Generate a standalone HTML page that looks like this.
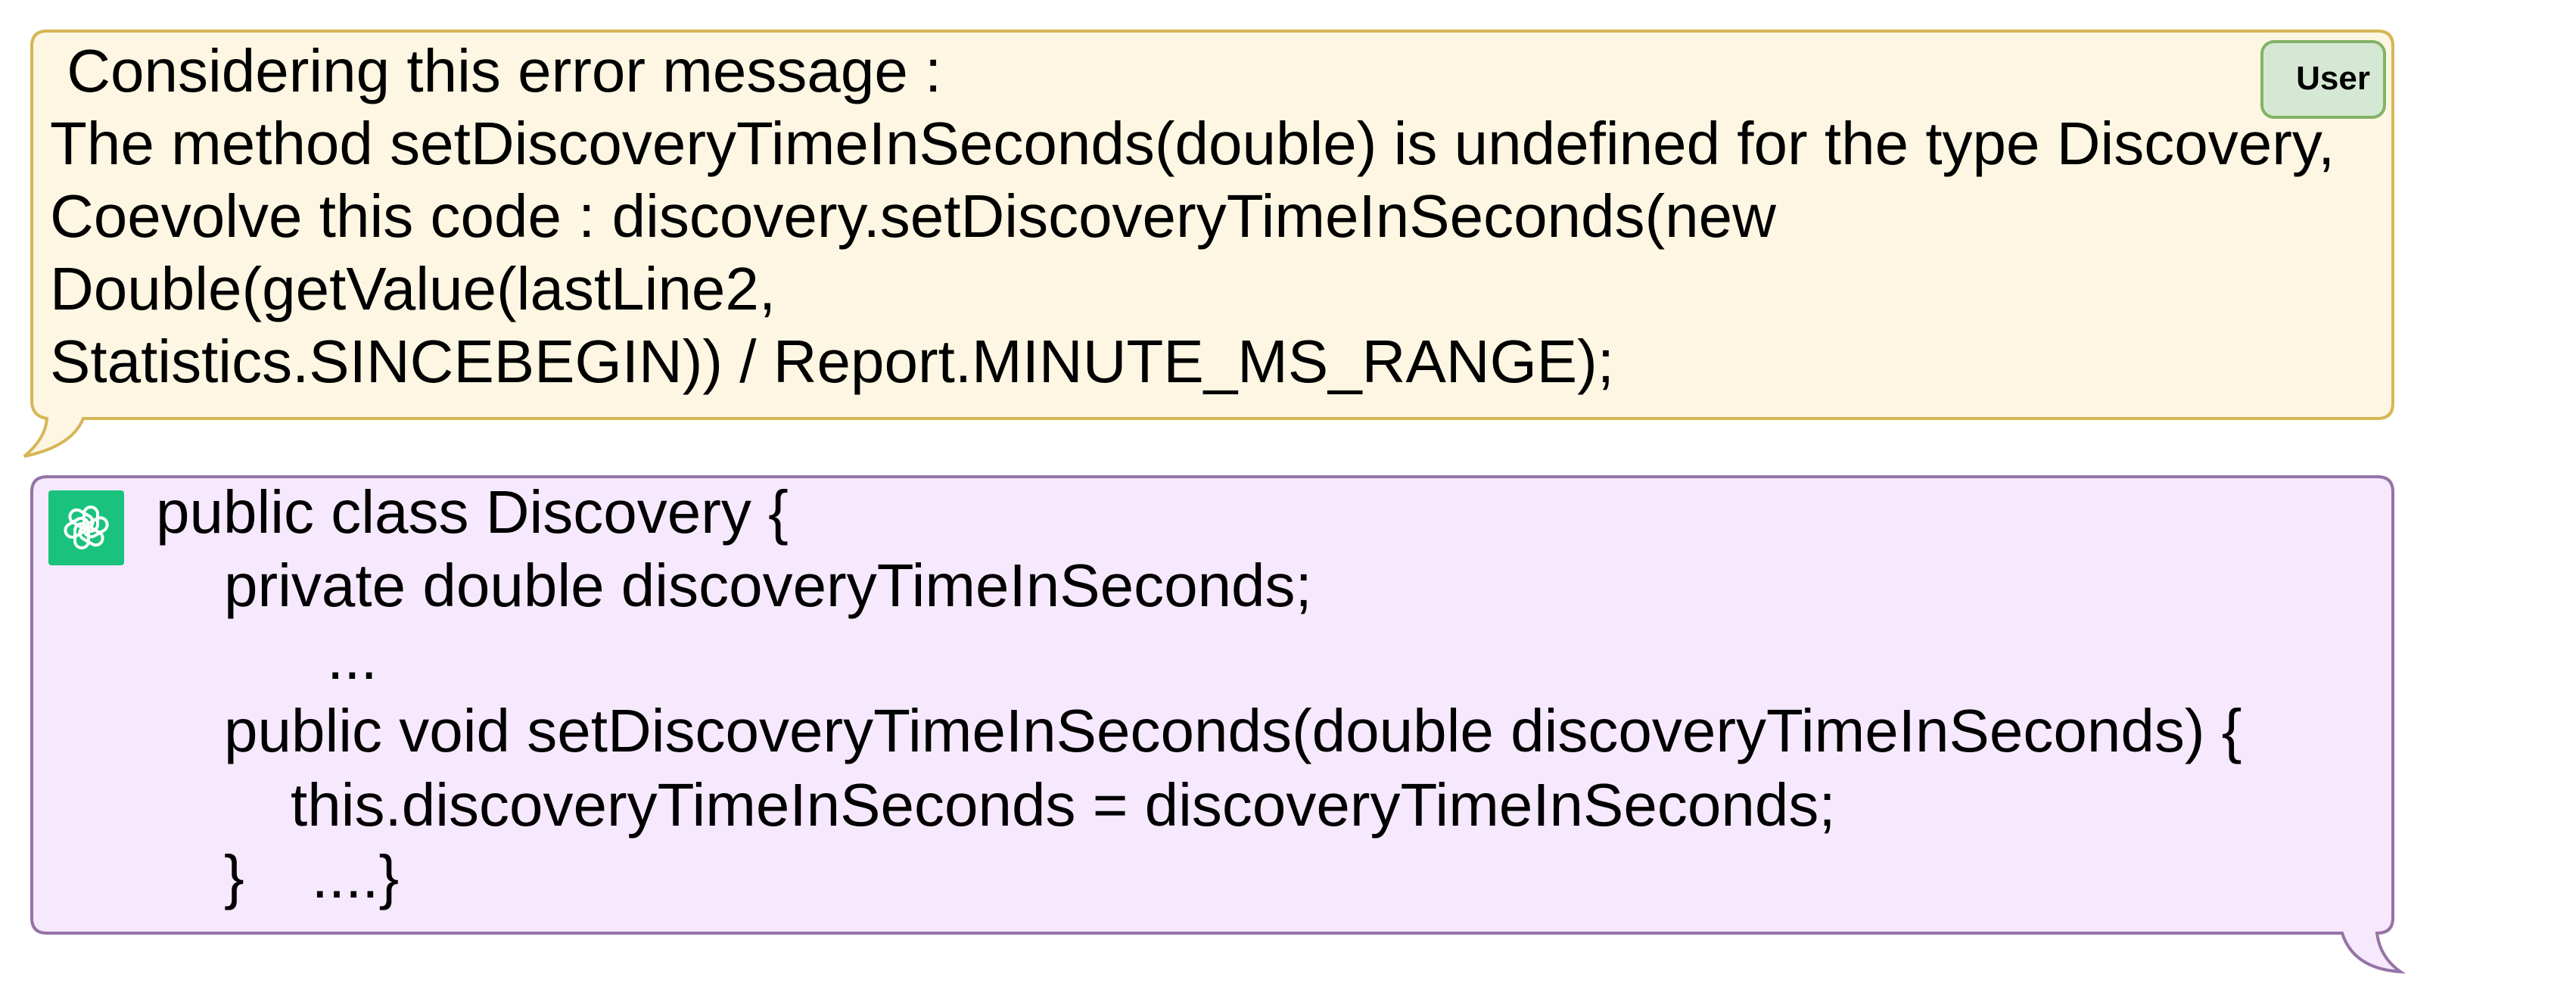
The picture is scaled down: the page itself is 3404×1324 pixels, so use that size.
<!DOCTYPE html>
<html><head><meta charset="utf-8"><style>
html,body{margin:0;padding:0;background:#fff;}
body{width:3404px;height:1324px;position:relative;overflow:hidden;font-family:"Liberation Sans",sans-serif;}
.t{position:absolute;font-size:80px;line-height:96px;white-space:pre;color:#000;}
</style></head><body>
<svg width="3404" height="1324" style="position:absolute;left:0;top:0">
<path d="M62,41 H3142 Q3162,41 3162,61 V533 Q3162,553 3142,553 H110 Q95,590 32,603 Q60,580 62,553 Q42,550 42,530 V61 Q42,41 62,41 Z" fill="#fdf6e2" stroke="#d6b656" stroke-width="4"/>
<path d="M62,630 H3142 Q3162,630 3162,650 V1213 Q3162,1233 3141,1233 Q3145,1265 3172,1284 Q3110,1280 3095,1233 H62 Q42,1233 42,1213 V650 Q42,630 62,630 Z" fill="#f6e9fd" stroke="#9673a6" stroke-width="4"/>
<rect x="2989" y="55" width="162" height="100" rx="16" fill="#d5e8d4" stroke="#82b366" stroke-width="4"/>
<text x="3132" y="118" font-family="Liberation Sans" font-weight="bold" font-size="44" text-anchor="end">User</text>
<rect x="64" y="648" width="100" height="99" rx="4" fill="#19c37d"/>
<g transform="translate(114,697)" fill="none" stroke="#fff" stroke-width="4">
<rect x="-9" y="-27" width="18" height="32" rx="9" transform="rotate(0) translate(6,0)"/>
<rect x="-9" y="-27" width="18" height="32" rx="9" transform="rotate(60) translate(6,0)"/>
<rect x="-9" y="-27" width="18" height="32" rx="9" transform="rotate(120) translate(6,0)"/>
<rect x="-9" y="-27" width="18" height="32" rx="9" transform="rotate(180) translate(6,0)"/>
<rect x="-9" y="-27" width="18" height="32" rx="9" transform="rotate(240) translate(6,0)"/>
<rect x="-9" y="-27" width="18" height="32" rx="9" transform="rotate(300) translate(6,0)"/>
</g>
</svg>
<div class="t" style="left:66px;top:46px"> Considering this error message :
The method setDiscoveryTimeInSeconds(double) is undefined for the type Discovery,
Coevolve this code : discovery.setDiscoveryTimeInSeconds(new
Double(getValue(lastLine2,
Statistics.SINCEBEGIN)) / Report.MINUTE_MS_RANGE);</div>
<div class="t" style="left:206px;top:629px">public class Discovery {</div>
<div class="t" style="left:296px;top:726px">private double discoveryTimeInSeconds;</div>
<div class="t" style="left:432px;top:822px">...</div>
<div class="t" style="left:296px;top:918px">public void setDiscoveryTimeInSeconds(double discoveryTimeInSeconds) {</div>
<div class="t" style="left:384px;top:1016px">this.discoveryTimeInSeconds = discoveryTimeInSeconds;</div>
<div class="t" style="left:296px;top:1111px">}    ....}</div>
</body></html>
